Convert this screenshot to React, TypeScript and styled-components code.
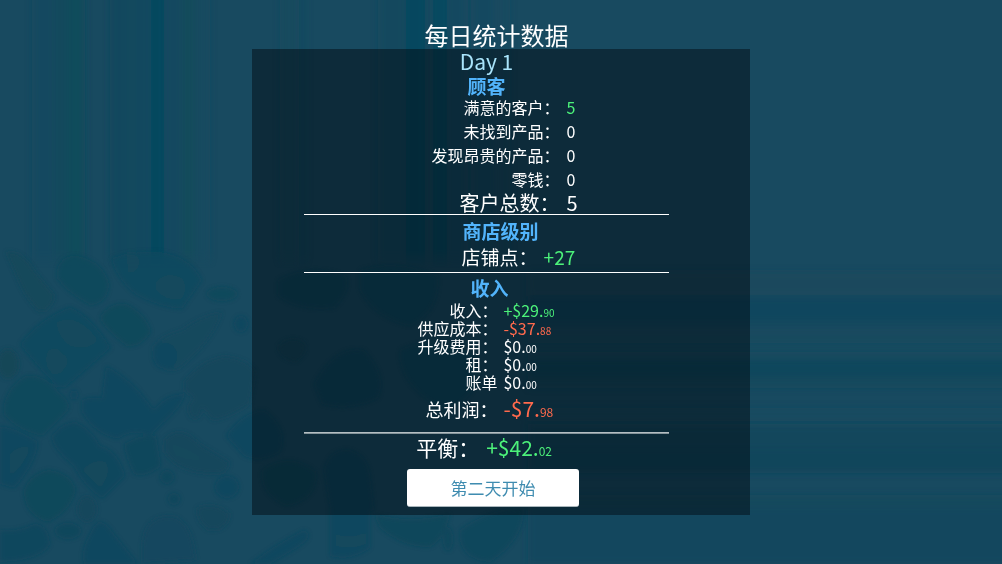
import React from "react";
import styled, { createGlobalStyle } from "styled-components";

const GlobalStyle = createGlobalStyle`
  * { box-sizing: border-box; }
  body {
    margin: 0;
    background: #184a60;
    color: #fff;
    font-family: "Noto Sans CJK SC", "Noto Sans", sans-serif;
  }
`;

const tones = { plain: "#ffffff", good: "#4cf27a", bad: "#ff6a4d" };
type Tone = keyof typeof tones;

const Screen = styled.main`
  position: relative;
  min-height: 100vh;
  overflow: hidden;
  display: flex;
  flex-direction: column;
  align-items: center;
  padding: 21px 16px 49px;
`;

const Backdrop = styled.svg`
  position: absolute;
  inset: 0;
  width: 100%;
  height: 100%;
  z-index: -1;
`;

const Title = styled.h1`
  margin: 0;
  padding-right: 9px;
  font-size: 24px;
  line-height: 28px;
  font-weight: 400;
`;

const Panel = styled.section`
  width: 100%;
  max-width: 498px;
  padding: 0 81px 8px 52px;
  background: rgba(0, 6, 12, 0.46);
  display: flex;
  flex-direction: column;
`;

const Day = styled.p`
  margin: 0;
  font-size: 21px;
  line-height: 24px;
  text-align: center;
  color: #a9e4fb;
`;

const Group = styled.section<{ $top?: number; $bottom?: number }>`
  padding: ${(p) => p.$top ?? 0}px 0 ${(p) => p.$bottom ?? 0}px;
`;

const Heading = styled.h2<{ $gap?: number; $indent?: number }>`
  margin: 0 0 ${(p) => p.$gap ?? 0}px;
  padding-left: ${(p) => p.$indent ?? 0}px;
  font-size: 19px;
  line-height: 18px;
  font-weight: 700;
  text-align: center;
  color: #52b4fb;
`;

const List = styled.dl`
  margin: 0;
`;

const Row = styled.div<{ $split: number; $gap: number; $line: number; $size: number; $top?: number }>`
  display: grid;
  grid-template-columns: ${(p) => p.$split}% 1fr;
  column-gap: ${(p) => p.$gap}px;
  align-items: baseline;
  margin-top: ${(p) => p.$top ?? 0}px;
  font-size: ${(p) => p.$size}px;
  line-height: ${(p) => p.$line}px;
  white-space: nowrap;
`;

const Label = styled.dt`
  display: flex;
  justify-content: flex-end;
`;

const Value = styled.dd<{ $tone: Tone; $size?: number }>`
  margin: 0;
  color: ${(p) => tones[p.$tone]};
  ${(p) => p.$size && `font-size: ${p.$size}px;`}
`;

const Cents = styled.span<{ $size: number }>`
  font-size: ${(p) => p.$size}px;
  line-height: 1;
`;

const Rule = styled.hr<{ $soft?: boolean }>`
  width: 100%;
  margin: 0;
  border: 0;
  height: ${(p) => (p.$soft ? 2 : 1)}px;
  background: ${(p) => (p.$soft ? "linear-gradient(#b4bec2 50%, #84949a 50%)" : "#fff")};
`;

const NextButton = styled.button`
  align-self: center;
  width: 172px;
  height: 38px;
  margin: 10px 0 0 13px;
  padding: 0;
  border: 0;
  border-bottom: 1px solid #a9b6bc;
  border-radius: 3px;
  background: #fff;
  color: #3f8cb0;
  font: inherit;
  font-size: 17px;
  line-height: 24px;
  cursor: pointer;
`;

const customers: { label: string; value: string; tone: Tone }[] = [
  { label: "满意的客户：", value: "5", tone: "good" },
  { label: "未找到产品：", value: "0", tone: "plain" },
  { label: "发现昂贵的产品：", value: "0", tone: "plain" },
  { label: "零钱：", value: "0", tone: "plain" },
];

const income: { label: string; value: string; cents: string; tone: Tone }[] = [
  { label: "收入：", value: "+$29.", cents: "90", tone: "good" },
  { label: "供应成本：", value: "-$37.", cents: "88", tone: "bad" },
  { label: "升级费用：", value: "$0.", cents: "00", tone: "plain" },
  { label: "租：", value: "$0.", cents: "00", tone: "plain" },
  { label: "账单", value: "$0.", cents: "00", tone: "plain" },
];

// [x, width, colour, opacity] of the vertical bands
const columns: [number, number, string, number][] = [
  [32, 22, "#104a5f", 0.6],
  [54, 30, "#0f4a5d", 0.7],
  [68, 17, "#0d4c59", 0.55],
  [110, 16, "#0a485d", 0.75],
  [126, 14, "#12495e", 0.7],
  [139, 12, "#0c4a5f", 0.7],
  [150, 14, "#08475f", 0.8],
  [164, 18, "#10495f", 0.6],
  [182, 12, "#0c4b5a", 0.7],
  [194, 16, "#124a60", 0.5],
  [280, 18, "#16495c", 0.5],
  [303, 3, "#104a5f", 0.5],
  [378, 28, "#13495e", 0.6],
  [405, 20, "#08475f", 0.75],
  [425, 8, "#10495e", 0.6],
  [433, 14, "#08485f", 0.7],
  [447, 20, "#0d495f", 0.6],
  [472, 24, "#10495f", 0.6],
  [500, 10, "#10495f", 0.5],
];

// [y, height, colour, opacity] of the horizontal bands
const bands: [number, number, string, number][] = [
  [272, 24, "#1b495b", 0.6],
  [297, 24, "#0b475e", 0.85],
  [321, 9, "#10485e", 0.6],
  [333, 10, "#14495e", 0.5],
  [352, 8, "#12495e", 0.5],
  [360, 16, "#09465d", 0.95],
  [376, 12, "#17485c", 0.6],
  [408, 12, "#12495f", 0.5],
  [425, 24, "#10475c", 0.7],
  [449, 24, "#0b455b", 0.8],
  [495, 14, "#18495c", 0.6],
  [509, 55, "#11475e", 0.7],
];

const blobs: [string, string][] = [
  ["M6 252Q22 250 34 270L55 296Q50 314 38 311Q24 296 18 280Z", "#16485a"],
  ["M57 270Q62 254 78 256Q104 262 109 284Q108 304 90 305Q66 292 57 278Z", "#0c4a5b"],
  ["M112 258Q135 250 160 252Q190 256 202 280L182 309Q160 308 135 294Q116 278 112 260Z", "#0a485f"],
  ["M21 343Q40 318 70 307Q92 316 111 348Q86 370 66 387L58 388Q40 370 21 346Z", "#07485f"],
  ["M101 316Q110 302 126 304Q146 314 151 332Q140 348 127 346Q108 332 101 320Z", "#11485a"],
  ["M153 347Q160 336 182 330Q200 316 222 312Q214 340 180 368Q164 376 153 358Z", "#15485d"],
  ["M4 404Q10 384 26 376Q46 374 58 392Q72 402 68 410Q54 426 42 436Q16 430 4 414Z", "#0d485b"],
  ["M82 400Q90 396 102 398L106 366Q122 374 138 390L154 410Q166 394 184 394Q186 402 162 424L150 436Q132 428 118 439Q94 434 82 412Z", "#0b475e"],
  ["M184 382Q200 360 226 356Q250 360 256 372L250 404Q226 420 212 420Q198 402 184 390Z", "#17475b"],
  ["M52 436Q62 422 76 422Q92 430 100 446Q118 450 125 476L102 499Q82 484 74 466Q54 450 52 438Z", "#0d465d"],
  ["M0 426Q18 428 38 442Q36 464 14 488L0 484Z", "#0c475e"],
  ["M124 444Q140 434 156 436L161 466Q146 478 134 474Q126 458 124 444Z", "#0e475c"],
  ["M164 440Q180 422 200 444L230 462Q228 476 210 474Q176 472 164 452Z", "#12475c"],
  ["M24 490Q30 474 48 470Q70 472 76 490Q70 512 48 522Q26 516 24 494Z", "#0c485a"],
  ["M92 530Q100 512 114 534L138 564L84 564Q80 550 92 530Z", "#0d465e"],
  ["M0 530Q18 532 34 524Q48 524 50 544Q42 560 0 562Z", "#0f465d"],
  ["M142 546Q144 514 172 516Q192 520 196 560L142 564Z", "#14475e"],
  ["M197 508Q214 500 230 514Q228 532 208 530Q196 522 197 508Z", "#17475b"],
  ["M226 436Q242 412 264 410Q290 430 280 452Q260 464 244 456Z", "#09475f"],
  ["M278 280Q310 262 346 276Q352 290 334 308Q300 312 278 296Z", "#0f475c"],
  ["M360 270Q400 258 438 276Q440 312 410 326Q374 318 360 290Z", "#0f485e"],
  ["M278 346Q290 334 304 342Q310 352 296 362Q282 360 278 350Z", "#12475a"],
  ["M314 384Q336 344 364 350Q388 376 378 398Q350 412 322 404Z", "#0c475d"],
  ["M400 350Q440 330 476 360Q484 396 446 410Q406 392 400 360Z", "#10485e"],
  ["M262 470Q290 450 316 472Q318 500 286 506Q262 494 262 476Z", "#11485b"],
  ["M324 470Q330 448 350 450Q368 456 370 476L374 510Q350 520 330 508Z", "#0c465e"],
  ["M330 508Q354 520 370 506L370 548Q350 562 330 556Z", "#0f475f"],
  ["M374 514Q410 524 450 514Q444 540 430 547Q404 548 380 528Z", "#0d475a"],
  ["M460 530Q490 508 524 508Q524 540 490 562Q464 560 460 540Z", "#0f465c"],
  ["M250 564Q276 544 304 530Q318 536 290 552L270 564Z", "#0d465e"],
];

const highlights = [
  "M56 322Q78 312 98 340Q88 352 70 346Q58 338 56 322Z",
  "M48 350Q60 344 68 360Q66 376 52 374Q42 364 48 350Z",
  "M156 282Q166 270 182 278Q190 290 180 300Q164 300 156 290Z",
  "M126 254Q136 250 140 262Q136 276 128 272Z",
  "M170 444Q186 446 204 460Q194 462 176 456Z",
  "M10 454Q20 444 30 448Q24 466 10 476Z",
  "M82 470Q94 458 106 462Q112 474 100 488Z",
  "M336 534Q350 540 366 532L366 544Q350 550 336 546Z",
];

const spots: [number, number, number, number, string][] = [
  [222, 294, 15, 7, "#0c495b"],
  [165, 356, 12, 13, "#08475f"],
  [8, 364, 11, 15, "#144657"],
  [241, 324, 7, 8, "#0a475f"],
  [74, 395, 4, 5, "#0a475f"],
  [167, 477, 7, 7, "#0b465c"],
  [174, 499, 6, 6, "#0b465c"],
  [227, 487, 12, 11, "#0a475f"],
  [87, 509, 10, 13, "#12475b"],
  [195, 409, 7, 10, "#12475b"],
  [68, 531, 13, 8, "#0d475b"],
  [448, 539, 5, 12, "#0d475b"],
];

function Scenery() {
  return (
    <Backdrop viewBox="0 0 1002 564" preserveAspectRatio="none" aria-hidden="true">
      <defs>
        <linearGradient id="fade" x1="0" y1="0" x2="0" y2="1">
          <stop offset="0.93" stopColor="#fff" />
          <stop offset="1" stopColor="#fff" stopOpacity="0" />
        </linearGradient>
        <mask id="columnMask">
          <rect width="520" height="268" fill="url(#fade)" />
        </mask>
        <filter id="soft" x="-5%" y="-5%" width="110%" height="110%">
          <feGaussianBlur stdDeviation="2" />
        </filter>
        <filter id="edge" x="-5%" y="-5%" width="110%" height="110%">
          <feGaussianBlur stdDeviation="3" />
        </filter>
      </defs>
      <rect width="1002" height="564" fill="#184a60" />
      <g mask="url(#columnMask)">
        <g filter="url(#edge)">
          {columns.map(([x, w, c, o]) => (
            <rect key={x} x={x} y="-10" width={w} height="290" fill={c} opacity={o} />
          ))}
        </g>
      </g>
      <g filter="url(#edge)">
        {bands.map(([y, h, c, o]) => (
          <rect key={y} x="528" y={y} width="490" height={h} fill={c} opacity={o} />
        ))}
      </g>
      <g filter="url(#soft)" opacity="0.8">
        {blobs.map(([d, c]) => (
          <path key={d} d={d} fill={c} />
        ))}
        {spots.map(([x, y, rx, ry, c]) => (
          <ellipse key={`${x}-${y}`} cx={x} cy={y} rx={rx} ry={ry} fill={c} />
        ))}
        {highlights.map((d) => (
          <path key={d} d={d} fill="#17485c" opacity="0.8" />
        ))}
      </g>
    </Backdrop>
  );
}

export default function App() {
  return (
    <>
      <GlobalStyle />
      <Screen>
        <Scenery />
        <Title>每日统计数据</Title>
        <Panel>
          <Day>Day 1</Day>
          <Group $top={4}>
            <Heading>顾客</Heading>
            <List>
              {customers.map((c) => (
                <Row key={c.label} $split={70} $gap={7} $line={24} $size={16}>
                  <Label>{c.label}</Label>
                  <Value $tone={c.tone}>{c.value}</Value>
                </Row>
              ))}
              <Row $split={70} $gap={7} $line={23} $size={20}>
                <Label>客户总数：</Label>
                <Value $tone="plain">5</Value>
              </Row>
            </List>
          </Group>
          <Rule />
          <Group $top={7} $bottom={3}>
            <Heading $gap={5} $indent={28}>商店级别</Heading>
            <List>
              <Row $split={64} $gap={6} $line={24} $size={19}>
                <Label>店铺点：</Label>
                <Value $tone="good">+27</Value>
              </Row>
            </List>
          </Group>
          <Rule />
          <Group $top={6} $bottom={11}>
            <Heading $gap={4} $indent={6}>收入</Heading>
            <List>
              {income.map((r) => (
                <Row key={r.label} $split={53} $gap={6} $line={18} $size={16}>
                  <Label>{r.label}</Label>
                  <Value $tone={r.tone}>
                    {r.value}
                    <Cents $size={10}>{r.cents}</Cents>
                  </Value>
                </Row>
              ))}
              <Row $split={53} $gap={6} $line={24} $size={18} $top={5}>
                <Label>总利润：</Label>
                <Value $tone="bad" $size={21}>
                  -$7.<Cents $size={12}>98</Cents>
                </Value>
              </Row>
            </List>
          </Group>
          <Rule $soft />
          <Group $top={1}>
            <List>
              <Row $split={48} $gap={7} $line={24} $size={21}>
                <Label>平衡：</Label>
                <Value $tone="good">
                  +$42.<Cents $size={12}>02</Cents>
                </Value>
              </Row>
            </List>
          </Group>
          <NextButton type="button">第二天开始</NextButton>
        </Panel>
      </Screen>
    </>
  );
}
